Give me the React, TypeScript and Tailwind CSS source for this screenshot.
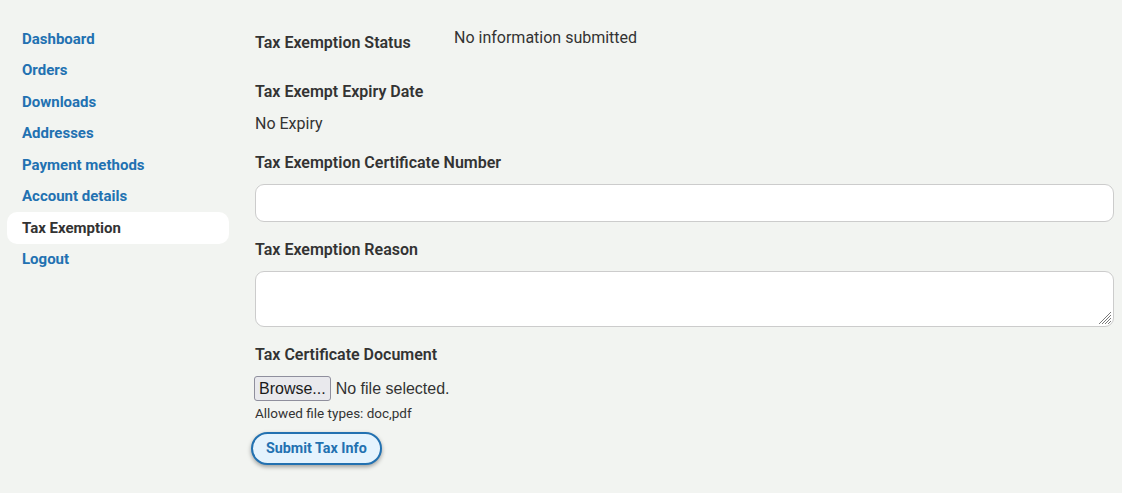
const NAV = [
    "Dashboard",
    "Orders",
    "Downloads",
    "Addresses",
    "Payment methods",
    "Account details",
    "Tax Exemption",
    "Logout",
];

function Sidebar() {
    return (
        <nav className="w-[222px] shrink-0 pt-[23px] flex flex-col">
            {NAV.map((item) => {
                const active = item === "Tax Exemption";
                return (
                    <a
                        key={item}
                        href="#"
                        className={
                            active
                                ? "h-[31.5px] flex items-center px-[15px] rounded-[10px] bg-white text-[15px] font-bold text-[#333333]"
                                : "h-[31.5px] flex items-center px-[15px] text-[15px] font-bold text-[#2271b1]"
                        }
                    >
                        {item}
                    </a>
                );
            })}
        </nav>
    );
}

function ResizeGrip() {
    return (
        <svg className="absolute right-[3px] bottom-[3px]" width="12" height="12" viewBox="0 0 12 12">
            <g stroke="#7a7a7a" strokeWidth="1">
                <line x1="12" y1="0" x2="0" y2="12" />
                <line x1="12" y1="3" x2="3" y2="12" />
                <line x1="12" y1="6" x2="6" y2="12" />
                <line x1="12" y1="9" x2="9" y2="12" />
            </g>
        </svg>
    );
}

export default function App() {
    return (
        <div className="min-h-[493px] w-[1122px] bg-[#f2f4f1] flex pl-[7px] font-['Roboto',sans-serif] text-[#333333]">
            <Sidebar />
            <main className="flex-1 pl-[26px] pr-[8px] pt-[27px]">
                <div className="flex items-start">
                    <div className="w-[199px] pt-[4px] text-[16px] leading-[24px] font-semibold">Tax Exemption Status</div>
                    <div className="-mt-[1px] text-[16px] leading-[24px]">No information submitted</div>
                </div>

                <div className="mt-[25px] text-[16px] leading-[24px] font-semibold">Tax Exempt Expiry Date</div>
                <div className="mt-[8px] text-[16px] leading-[24px]">No Expiry</div>

                <div className="mt-[15px] text-[16px] leading-[24px] font-semibold">Tax Exemption Certificate Number</div>
                <input
                    type="text"
                    className="mt-[9px] block w-full h-[38px] rounded-[9px] border border-[#cccccc] bg-white px-3 outline-none"
                />

                <div className="mt-[16px] text-[16px] leading-[24px] font-semibold">Tax Exemption Reason</div>
                <div className="relative mt-[9px]">
                    <textarea className="block w-full h-[56px] rounded-[9px] border border-[#cccccc] bg-white px-3 py-2 resize-none outline-none" />
                    <ResizeGrip />
                </div>

                <div className="mt-[16px] text-[16px] leading-[24px] font-semibold">Tax Certificate Document</div>
                <div className="mt-[9px] -ml-[1px] flex items-center gap-[5px] font-['Liberation_Sans',sans-serif] text-[16px]">
                    <button className="h-[25px] px-[4px] rounded-[3px] border border-[#8f8f9d] bg-[#e9e9ed] text-[#1a1a1a]">
                        Browse...
                    </button>
                    <span className="text-[#333333]">No file selected.</span>
                </div>
                <div className="mt-[2px] text-[13.5px] leading-[20px]">Allowed file types: doc,pdf</div>

                <button className="mt-[9px] -ml-[4px] h-[33px] px-[13px] rounded-full border-2 border-[#2271b1] bg-[#e5f3fd] text-[14.3px] font-bold text-[#2271b1] shadow-[0_2px_4px_rgba(0,0,0,0.35)]">
                    Submit Tax Info
                </button>
            </main>
        </div>
    );
}
